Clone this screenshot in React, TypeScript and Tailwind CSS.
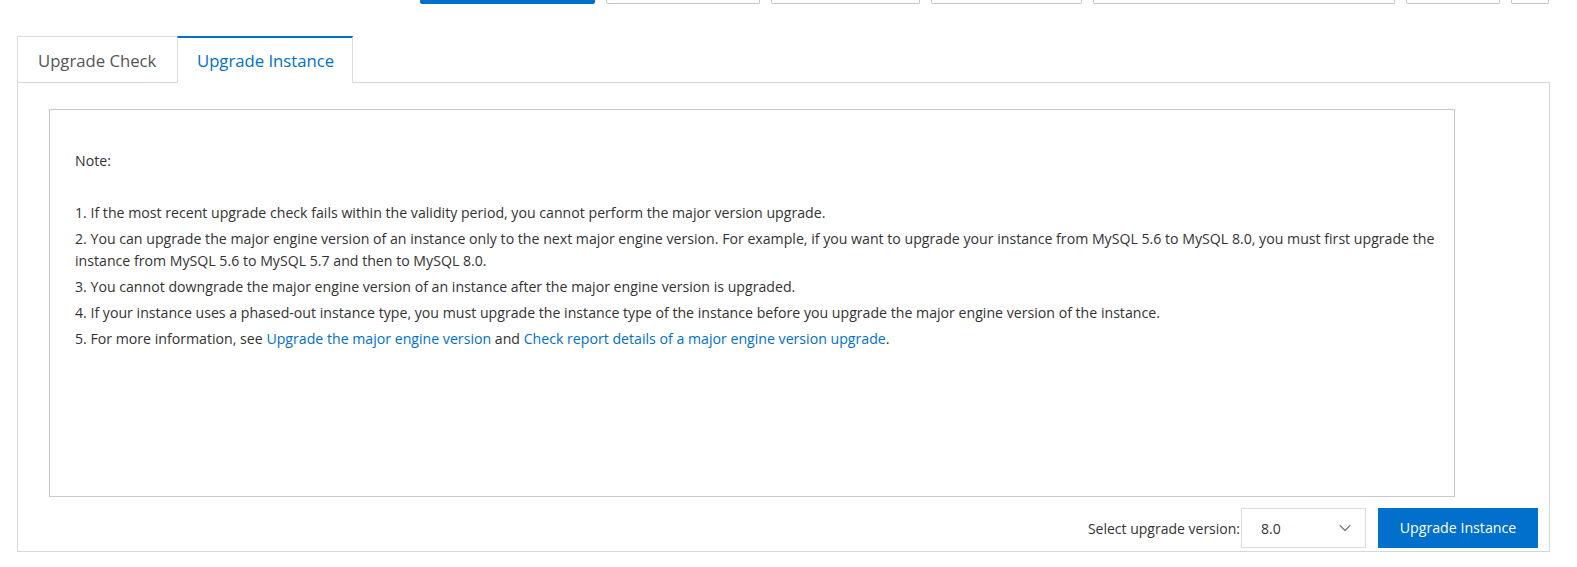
import { ChevronDown } from "lucide-react";

const topButtons = [
  { w: "w-[175px]", primary: true },
  { w: "w-[154px]" },
  { w: "w-[149px]" },
  { w: "w-[151px]" },
  { w: "w-[302px]" },
  { w: "w-[94px]" },
  { w: "w-[38px]" },
];

function Link({ children }: { children: React.ReactNode }) {
  return <a className="text-[#0070cc] cursor-pointer">{children}</a>;
}

export default function App() {
  return (
    <div
      className="w-[1577px] h-[567px] overflow-hidden bg-white text-[#333]"
      style={{ fontFamily: '"Open Sans", "Noto Sans", sans-serif' }}
    >
      {/* toolbar buttons, scrolled off the top */}
      <div className="flex gap-[11px] pl-[420px] h-[4px]">
        {topButtons.map((b, i) => (
          <div
            key={i}
            className={`${b.w} h-[4px] rounded-b-[2px] ${
              b.primary ? "bg-[#0070cc]" : "border border-t-0 border-[#c4c6cc] bg-white"
            }`}
          />
        ))}
      </div>

      <div className="mt-[32px] ml-[17px] w-[1533px]">
        {/* tabs */}
        <div className="flex h-[46px]">
          <div className="w-[161px] h-[46px] border border-b-0 border-[#dcdcdc] bg-white flex items-center pl-[20px] pt-[2px] text-[16.7px] text-[#555]">
            Upgrade Check
          </div>
          <div className="relative z-10 w-[176px] h-[47px] -ml-px border-x border-[#dcdcdc] border-t-2 border-t-[#0070cc] bg-white flex items-center pl-[19px] text-[16.7px] text-[#0070cc]">
            Upgrade Instance
          </div>
        </div>

        {/* panel */}
        <div className="border border-[#d7d7d7] h-[470px] pl-[31px] pt-[26px] pr-[11px] flex flex-col">
          <div className="w-[1406px] h-[388px] border border-[#c9c9c9] pl-[25px] pr-[8px] pt-[40px] text-[14.15px] leading-[22px] text-[#333]">
            <div className="flex flex-col gap-[4px]">
              <p>Note:</p>
              <p>&nbsp;</p>
              <p>1. If the most recent upgrade check fails within the validity period, you cannot perform the major version upgrade.</p>
              <p>
                2. You can upgrade the major engine version of an instance only to the next major engine version. For example, if you want to upgrade your instance from MySQL 5.6 to MySQL 8.0, you must first upgrade the instance from MySQL 5.6 to MySQL 5.7 and then to MySQL 8.0.
              </p>
              <p>3. You cannot downgrade the major engine version of an instance after the major engine version is upgraded.</p>
              <p>4. If your instance uses a phased-out instance type, you must upgrade the instance type of the instance before you upgrade the major engine version of the instance.</p>
              <p>
                5. For more information, see <Link>Upgrade the major engine version</Link> and{" "}
                <Link>Check report details of a major engine version upgrade</Link>.
              </p>
            </div>
          </div>

          <div className="mt-[11px] flex items-center justify-end">
            <span className="text-[14px] text-[#333]">Select upgrade version:</span>
            <div className="ml-px w-[125px] h-[40px] border border-[#dcdcdc] flex items-center justify-between pl-[19px] pr-[10px] text-[14px]">
              <span>8.0</span>
              <ChevronDown className="w-[20px] h-[20px] text-[#777]" strokeWidth={1.4} />
            </div>
            <button
              type="button"
              className="ml-[12px] w-[160px] h-[40px] bg-[#0070cc] text-white text-[14.2px]"
            >
              Upgrade Instance
            </button>
          </div>
        </div>
      </div>
    </div>
  );
}
